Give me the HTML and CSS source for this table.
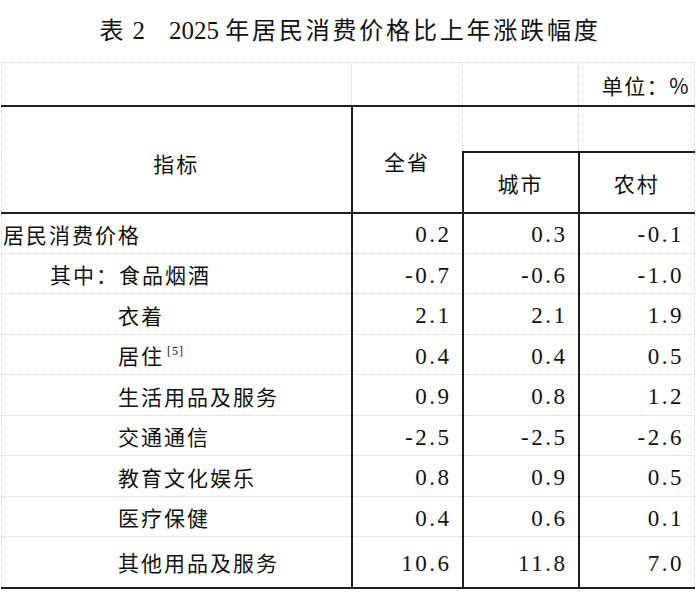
FILE: index.html
```html
<!DOCTYPE html>
<html lang="zh-CN">
<head>
<meta charset="utf-8">
<title>表 2 2025 年居民消费价格比上年涨跌幅度</title>
<link rel="stylesheet" href="styles.css">
</head>
<body>
<h1 class="title"><span class="t-cjk">表</span> 2<span class="t-gap">　</span>2025 <span class="t-cjk">年居民消费价格比上年涨跌幅度</span></h1>
<table class="sheet">
  <colgroup>
    <col class="c-name">
    <col class="c-all">
    <col class="c-sub">
    <col class="c-sub">
  </colgroup>
  <tr class="r-unit">
    <td></td><td></td><td></td><td class="unit">单位：%</td>
  </tr>
  <tr class="r-h1">
    <th rowspan="2" class="h-name">指标</th>
    <th rowspan="2" class="h-all">全省</th>
    <td class="h-blank"></td>
    <td class="h-blank"></td>
  </tr>
  <tr class="r-h2">
    <th class="h-sub">城市</th>
    <th class="h-sub">农村</th>
  </tr>
  <tr class="r-a">
    <td class="name">居民消费价格</td><td class="num">0.2</td><td class="num">0.3</td><td class="num last">-0.1</td>
  </tr>
  <tr class="r-b">
    <td class="name lvl1">其中：食品烟酒</td><td class="num">-0.7</td><td class="num">-0.6</td><td class="num last">-1.0</td>
  </tr>
  <tr class="r-a">
    <td class="name lvl2">衣着</td><td class="num">2.1</td><td class="num">2.1</td><td class="num last">1.9</td>
  </tr>
  <tr class="r-b">
    <td class="name lvl2">居住<sup class="note">[5]</sup></td><td class="num">0.4</td><td class="num">0.4</td><td class="num last">0.5</td>
  </tr>
  <tr class="r-a">
    <td class="name lvl2">生活用品及服务</td><td class="num">0.9</td><td class="num">0.8</td><td class="num last">1.2</td>
  </tr>
  <tr class="r-b">
    <td class="name lvl2">交通通信</td><td class="num">-2.5</td><td class="num">-2.5</td><td class="num last">-2.6</td>
  </tr>
  <tr class="r-a">
    <td class="name lvl2">教育文化娱乐</td><td class="num">0.8</td><td class="num">0.9</td><td class="num last">0.5</td>
  </tr>
  <tr class="r-b">
    <td class="name lvl2">医疗保健</td><td class="num">0.4</td><td class="num">0.6</td><td class="num last">0.1</td>
  </tr>
  <tr class="r-end">
    <td class="name lvl2">其他用品及服务</td><td class="num">10.6</td><td class="num">11.8</td><td class="num last">7.0</td>
  </tr>
</table>
</body>
</html>
```
FILE: styles.css
```css
html, body {
  margin: 0;
  padding: 0;
  background: #ffffff;
}

body {
  color: #111111;
  font-family: "Liberation Serif", "Noto Sans CJK SC", serif;
}

.title {
  margin: 0;
  height: 62px;
  line-height: 58px;
  text-align: center;
  font-size: 25px;
  font-weight: normal;
  white-space: pre;
}

.t-cjk {
  font-family: "Noto Sans CJK SC", sans-serif;
  font-size: 24px;
  font-weight: normal;
  letter-spacing: 2.8px;
}

.t-gap {
  font-family: "Noto Sans CJK SC", sans-serif;
  font-size: 24px;
}

.sheet {
  border-collapse: collapse;
  table-layout: fixed;
  width: 693px;
  margin-left: 1px;
}

.c-name { width: 350px; }
.c-all { width: 111px; }
.c-sub { width: 116px; }

.sheet td,
.sheet th {
  border: 1px dotted #d6d6d6;
  padding: 0;
  font-size: 21px;
  font-weight: normal;
  line-height: 24px;
  vertical-align: middle;
  white-space: nowrap;
  overflow: visible;
}

.r-unit { height: 43px; }
.r-h1 { height: 46px; }
.r-h2 { height: 61px; }
.r-a { height: 41px; }
.r-b { height: 40px; }
.r-end { height: 51px; }

.r-unit td {
  border-bottom: 2px solid #1e1e1e;
}

.unit {
  text-align: right;
  padding-right: 4px !important;
  padding-top: 3px !important;
  font-family: "Noto Sans CJK SC", sans-serif;
  letter-spacing: 1.5px;
}

.h-name,
.h-all {
  text-align: center;
  font-family: "Noto Sans CJK SC", sans-serif;
  letter-spacing: 2px;
  border-bottom: 2px solid #1e1e1e !important;
}

.h-name {
  border-right: 2px solid #1e1e1e !important;
  padding-top: 8px !important;
}

.h-all {
  padding-top: 4px !important;
}

.h-sub {
  text-align: center;
  font-family: "Noto Sans CJK SC", sans-serif;
  letter-spacing: 2px;
  border-top: 2px solid #1e1e1e !important;
  border-left: 2px solid #1e1e1e !important;
  border-bottom: 2px solid #1e1e1e !important;
  padding-top: 1px !important;
}

.name {
  text-align: left;
  font-family: "Noto Sans CJK SC", sans-serif;
  letter-spacing: 2px;
  padding-left: 1px !important;
  padding-top: 1px !important;
  border-right: 2px solid #1e1e1e !important;
}

.lvl1 { padding-left: 48px !important; }
.lvl2 { padding-left: 116px !important; }

.note {
  font-family: "Liberation Serif", serif;
  font-size: 12px;
  letter-spacing: 1px;
  vertical-align: 9px;
  line-height: 0;
  margin-left: 3px;
}

.num {
  text-align: right;
  font-size: 23px !important;
  letter-spacing: 2.5px;
  padding-right: 10px !important;
  padding-top: 4px !important;
  border-right: 2px solid #1e1e1e !important;
}

.num.last {
  border-right: 1px dotted #d6d6d6 !important;
}

.r-end td {
  border-bottom: 2px solid #1e1e1e !important;
}
```
